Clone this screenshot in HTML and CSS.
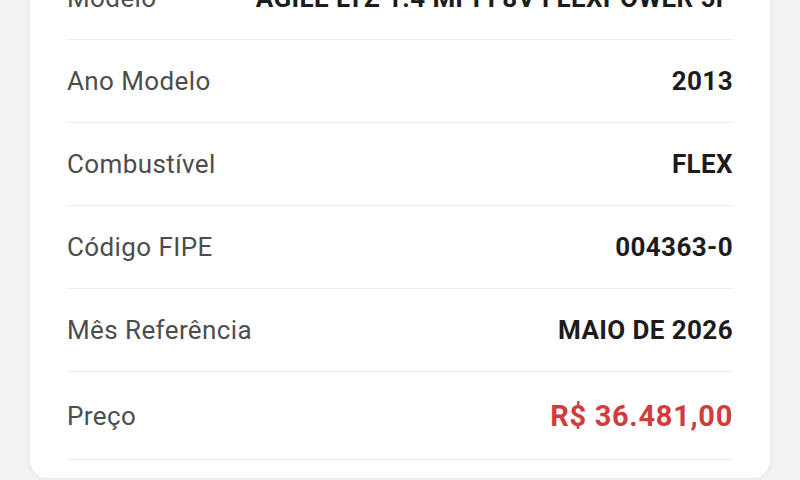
FILE: index.html
```html
<!DOCTYPE html>
<html lang="pt-BR">
<head>
    <meta charset="UTF-8">
    <meta name="viewport" content="width=device-width, initial-scale=1.0">
    <title>Consulta FIPE</title>
    <link rel="stylesheet" href="styles.css">
</head>
<body>

    <div class="card">
        <div class="row">
            <span class="label">Modelo</span>
            <span class="value">AGILE LTZ 1.4 MPFI 8V FLEXPOWER 5P</span>
        </div>
        <div class="row">
            <span class="label">Ano Modelo</span>
            <span class="value">2013</span>
        </div>
        <div class="row">
            <span class="label">Combustível</span>
            <span class="value">FLEX</span>
        </div>
        <div class="row">
            <span class="label">Código FIPE</span>
            <span class="value">004363-0</span>
        </div>
        <div class="row">
            <span class="label">Mês Referência</span>
            <span class="value">MAIO DE 2026</span>
        </div>
        <div class="row price-row">
            <span class="label">Preço</span>
            <span class="value price">R$ 36.481,00</span>
        </div>
    </div>

</body>
</html>
```

FILE: styles.css
```css
body {
    margin: 0;
    background: #f3f3f3;
    font-family: Roboto, "Noto Sans", sans-serif;
    height: 480px;
    overflow: hidden;
}

.card {
    background: #fff;
    margin: -43px 30px 0 30px;
    padding: 0 37px 18px 37px;
    border-radius: 0 0 18px 18px;
    box-shadow: 0 1px 6px rgba(0, 0, 0, 0.06);
}

.row {
    display: flex;
    justify-content: space-between;
    align-items: center;
    height: 82px;
    border-bottom: 1px solid #ececec;
}

.price-row {
    height: 87px;
}

.label {
    color: #4d4d4d;
    font-size: 26px;
    letter-spacing: 0.4px;
}

.value {
    color: #1c1c1c;
    font-size: 26px;
    font-weight: 700;
    letter-spacing: 0.4px;
}

.price {
    color: #d23c3c;
    font-size: 29px;
    letter-spacing: 0.7px;
}
```
